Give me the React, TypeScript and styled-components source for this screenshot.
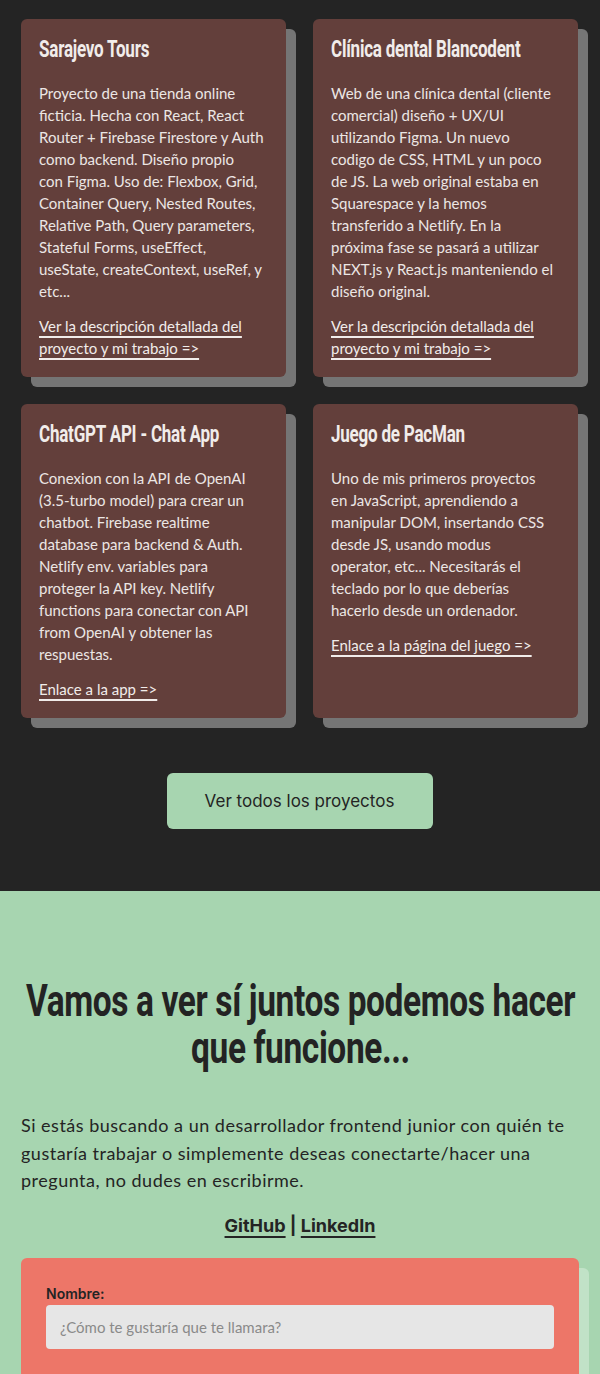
import React from "react";
import styled, { createGlobalStyle } from "styled-components";

const GlobalStyle = createGlobalStyle`
  html, body { margin: 0; padding: 0; }
  body {
    background: #242424;
    font-family: Lato, "Open Sans", sans-serif;
    -webkit-font-smoothing: antialiased;
  }
  * { box-sizing: border-box; }
`;

const condensed = `Roboto, "Liberation Sans", sans-serif`;

const Projects = styled.section`
  background: #242424;
  padding: 19px 22px 62px 21px;
`;

const Grid = styled.div`
  display: grid;
  grid-template-columns: minmax(0, 1fr) minmax(0, 1fr);
  column-gap: 27px;
  row-gap: 27px;
`;

const Card = styled.article`
  background: #633f3b;
  border-radius: 6px;
  box-shadow: 10px 10px 0 0 #757575;
  padding: 16px 18px 18px;
  color: #ece6e4;
  min-width: 0;
`;

const CardTitle = styled.h3`
  margin: 0 0 17px;
  font-family: ${condensed};
  font-weight: 700;
  font-size: 23px;
  line-height: 30px;
  letter-spacing: -0.3px;
  color: #f1ecea;
  white-space: nowrap;
  transform: scaleX(0.74);
  transform-origin: left center;
`;

const CardText = styled.p`
  margin: 0 0 13px;
  font-size: 15px;
  line-height: 22px;
  white-space: nowrap;
`;

const CardLink = styled.a`
  display: block;
  font-size: 15px;
  line-height: 22px;
  color: #f1ecea;
  text-decoration: underline;
  text-decoration-thickness: 2px;
  text-underline-offset: 4px;
  white-space: nowrap;
`;

const ButtonRow = styled.div`
  display: flex;
  justify-content: center;
  margin-top: 55px;
`;

const AllButton = styled.button`
  width: 266px;
  height: 56px;
  border: none;
  border-radius: 6px;
  background: #a7d5b0;
  color: #242424;
  font-family: Inter, "Liberation Sans", sans-serif;
  font-size: 17px;
  cursor: pointer;
`;

const Contact = styled.section`
  background: #a7d5b0;
  padding: 86px 21px 40px;
  color: #242424;
`;

const HeadingWrap = styled.div`
  display: flex;
  justify-content: center;
  margin: 0 0 41px;
`;

const Heading = styled.h2`
  margin: 0;
  flex: none;
  width: max-content;
  font-family: ${condensed};
  font-weight: 700;
  font-size: 45px;
  line-height: 47px;
  letter-spacing: -0.5px;
  text-align: center;
  white-space: nowrap;
  color: #232323;
  transform: scaleX(0.743);
  transform-origin: center center;
`;

const Lead = styled.p`
  margin: 0 0 19px;
  font-size: 18px;
  line-height: 27.5px;
  letter-spacing: 0.5px;
  white-space: nowrap;
`;

const Socials = styled.p`
  margin: 0 0 20px;
  text-align: center;
  font-family: Inter, "Liberation Sans", sans-serif;
  font-weight: 700;
  font-size: 18px;
  line-height: 24px;
`;

const SocialLink = styled.a`
  color: #242424;
  text-decoration: underline;
  text-decoration-thickness: 2px;
  text-underline-offset: 4px;
`;

const FormCard = styled.form`
  background: #ed7668;
  border-radius: 6px;
  box-shadow: 10px 10px 0 0 #c1e2c7;
  padding: 27px 25px 40px;
`;

const Label = styled.label`
  display: block;
  font-family: Inter, "Liberation Sans", sans-serif;
  font-weight: 600;
  font-size: 14px;
  line-height: 18px;
  color: #242424;
  margin-bottom: 2px;
`;

const Input = styled.input`
  display: block;
  width: 100%;
  height: 44px;
  border: none;
  border-radius: 4px;
  background: #e6e6e6;
  padding: 0 14px;
  font-family: Lato, sans-serif;
  font-size: 15px;
  color: #242424;
  &::placeholder { color: #8a8a8a; }
`;

type Project = { title: string; lines: string[]; link: string[] };

const projects: Project[] = [
  {
    title: "Sarajevo Tours",
    lines: [
      "Proyecto de una tienda online",
      "ficticia. Hecha con React, React",
      "Router + Firebase Firestore y Auth",
      "como backend. Diseño propio",
      "con Figma. Uso de: Flexbox, Grid,",
      "Container Query, Nested Routes,",
      "Relative Path, Query parameters,",
      "Stateful Forms, useEffect,",
      "useState, createContext, useRef, y",
      "etc...",
    ],
    link: ["Ver la descripción detallada del", "proyecto y mi trabajo =>"],
  },
  {
    title: "Clínica dental Blancodent",
    lines: [
      "Web de una clínica dental (cliente",
      "comercial) diseño + UX/UI",
      "utilizando Figma. Un nuevo",
      "codigo de CSS, HTML y un poco",
      "de JS. La web original estaba en",
      "Squarespace y la hemos",
      "transferido a Netlify. En la",
      "próxima fase se pasará a utilizar",
      "NEXT.js y React.js manteniendo el",
      "diseño original.",
    ],
    link: ["Ver la descripción detallada del", "proyecto y mi trabajo =>"],
  },
  {
    title: "ChatGPT API - Chat App",
    lines: [
      "Conexion con la API de OpenAI",
      "(3.5-turbo model) para crear un",
      "chatbot. Firebase realtime",
      "database para backend & Auth.",
      "Netlify env. variables para",
      "proteger la API key. Netlify",
      "functions para conectar con API",
      "from OpenAI y obtener las",
      "respuestas.",
    ],
    link: ["Enlace a la app =>"],
  },
  {
    title: "Juego de PacMan",
    lines: [
      "Uno de mis primeros proyectos",
      "en JavaScript, aprendiendo a",
      "manipular DOM, insertando CSS",
      "desde JS, usando modus",
      "operator, etc... Necesitarás el",
      "teclado por lo que deberías",
      "hacerlo desde un ordenador.",
    ],
    link: ["Enlace a la página del juego =>"],
  },
];

const withBreaks = (lines: string[]) =>
  lines.map((l, i) => (
    <React.Fragment key={i}>
      {l}
      {i < lines.length - 1 && <br />}
    </React.Fragment>
  ));

export default function App() {
  return (
    <>
      <GlobalStyle />
      <Projects>
        <Grid>
          {projects.map((p) => (
            <Card key={p.title}>
              <CardTitle>{p.title}</CardTitle>
              <CardText>{withBreaks(p.lines)}</CardText>
              <CardLink href="#">{withBreaks(p.link)}</CardLink>
            </Card>
          ))}
        </Grid>
        <ButtonRow>
          <AllButton type="button">Ver todos los proyectos</AllButton>
        </ButtonRow>
      </Projects>
      <Contact>
        <HeadingWrap>
          <Heading>
            Vamos a ver sí juntos podemos hacer
            <br />
            que funcione...
          </Heading>
        </HeadingWrap>
        <Lead>
          Si estás buscando a un desarrollador frontend junior con quién te
          <br />
          gustaría trabajar o simplemente deseas conectarte/hacer una
          <br />
          pregunta, no dudes en escribirme.
        </Lead>
        <Socials>
          <SocialLink href="#">GitHub</SocialLink> | <SocialLink href="#">LinkedIn</SocialLink>
        </Socials>
        <FormCard onSubmit={(e) => e.preventDefault()}>
          <Label htmlFor="nombre">Nombre:</Label>
          <Input id="nombre" placeholder="¿Cómo te gustaría que te llamara?" />
        </FormCard>
      </Contact>
    </>
  );
}
